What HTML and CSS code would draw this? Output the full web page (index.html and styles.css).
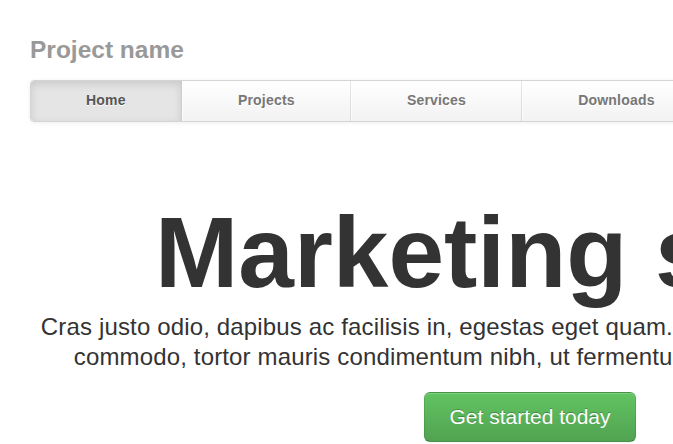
FILE: index.html
```
<!DOCTYPE html>
<html lang="en">
  <head>
    <meta charset="UTF-8">
    <title>Justified Nav</title>
    <link rel="stylesheet" href="styles.css">
  </head>
  <body>
    <div class="container">
      <div class="masthead">
        <h3 class="muted">Project name</h3>
        <div class="navbar">
          <ul class="nav">
            <li class="active"><a href="#">Home</a></li>
            <li><a href="#">Projects</a></li>
            <li><a href="#">Services</a></li>
            <li><a href="#">Downloads</a></li>
            <li><a href="#">About</a></li>
            <li><a href="#">Contact</a></li>
          </ul>
        </div>
      </div>

      <div class="jumbotron">
        <h1>Marketing stuff!</h1>
        <p class="lead">Cras justo odio, dapibus ac facilisis in, egestas eget quam. Fusce dapibus, tellus ac cursus commodo, tortor mauris condimentum nibh, ut fermentum massa justo sit amet risus.</p>
        <a class="btn btn-success" href="#">Get started today</a>
      </div>
    </div>
  </body>
</html>
```

FILE: styles.css
```
html {
  overflow: hidden;
}

body {
  margin: 0;
  padding: 20px 30px 60px;
  font-family: "Liberation Sans", Arial, sans-serif;
  font-size: 14px;
  line-height: 20px;
  color: #333;
  background: #fff;
}

.container {
  width: 1000px;
}

.masthead h3 {
  margin: 10px 0;
  font-size: 24.5px;
  line-height: 40px;
  font-weight: bold;
}

.muted {
  color: #999;
}

.navbar {
  margin-bottom: 20px;
}

.nav {
  display: flex;
  margin: 0;
  padding: 0;
  list-style: none;
  background: linear-gradient(to bottom, #fff, #f2f2f2);
  border: 1px solid #d4d4d4;
  border-radius: 4px;
  box-shadow: 0 1px 4px rgba(0,0,0,0.065);
}

.nav li {
  flex: 1 1 auto;
  display: flex;
}

.nav li a {
  flex: 1;
  padding: 9px 15px 11px;
  font-weight: bold;
  letter-spacing: 0.2px;
  text-align: center;
  color: #777;
  text-decoration: none;
  text-shadow: 0 1px 0 #fff;
  border-left: 1px solid rgba(255,255,255,0.75);
  border-right: 1px solid rgba(0,0,0,0.1);
}

.nav li:first-child a {
  border-left: 0;
  border-radius: 3px 0 0 3px;
}

.nav li:last-child a {
  border-right: 0;
  border-radius: 0 3px 3px 0;
}

.nav li.active a {
  color: #555;
  background: #e5e5e5;
  box-shadow: inset 0 3px 8px rgba(0,0,0,0.125);
}

.jumbotron {
  margin: 80px 0;
  text-align: center;
}

.jumbotron h1 {
  margin: 10px 0;
  font-size: 100px;
  line-height: 1;
  font-weight: bold;
}

.lead {
  margin: 0 0 20px;
  font-size: 24px;
  line-height: 1.25;
  font-weight: 200;
  letter-spacing: 0.15px;
}

.btn {
  display: inline-block;
  padding: 14px 24px;
  font-size: 21px;
  line-height: 20px;
  text-decoration: none;
  border-radius: 6px;
}

.btn-success {
  color: #fff;
  text-shadow: 0 -1px 0 rgba(0,0,0,0.25);
  background: linear-gradient(to bottom, #62c462, #51a351);
  border: 1px solid rgba(0,0,0,0.1);
  border-bottom-color: rgba(0,0,0,0.25);
  box-shadow: inset 0 1px 0 rgba(255,255,255,0.2), 0 1px 2px rgba(0,0,0,0.05);
}
```
